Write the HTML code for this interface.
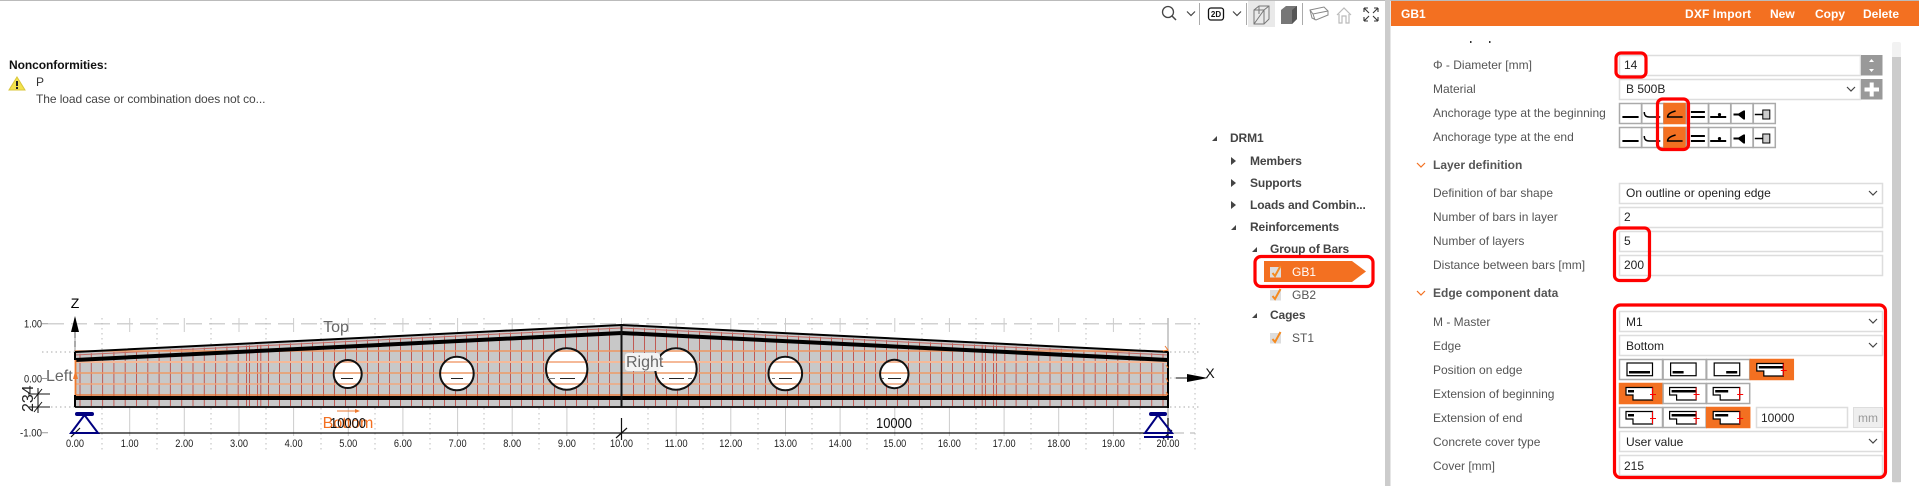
<!DOCTYPE html>
<html><head><meta charset="utf-8"><title>GB1</title>
<style>
html,body{margin:0;padding:0;background:#fff;width:1919px;height:486px;overflow:hidden}
svg{display:block;font-family:"Liberation Sans",sans-serif}
.l{font-size:12px;fill:#555}
.v{font-size:12px;fill:#222}
.t{font-size:12px;font-weight:bold;fill:#444;letter-spacing:-.12px}
.a{font-size:11px;fill:#222}
.f{fill:#fff;stroke:#ddd;stroke-width:1.5}
.c{fill:#fff;stroke:#aaa;stroke-width:1.5}
.o{fill:#f37021;stroke:#f37021;stroke-width:1.5}
.r{fill:none;stroke:#f00;stroke-width:3.2}
.h{font-size:12px;font-weight:bold;fill:#fff}
</style></head><body>
<svg width="1919" height="486" viewBox="0 0 1919 486" xmlns="http://www.w3.org/2000/svg">
<defs>
<clipPath id="beam"><path d="M75 354L621.5 327L1168 354V406H75Z"/></clipPath>
<g id="a1"><path d="M3.4 14H19.6" stroke="#000" stroke-width="2" fill="none"/></g>
<g id="a2"><path d="M3 9C3 13 5 14 8 14H19" stroke="#000" stroke-width="1.5" fill="none"/></g>
<g id="a3"><path d="M12 8C8 9 4 11 4 14H19" stroke="#000" stroke-width="1.5" fill="none"/></g>
<g id="a4"><path d="M5 9H19M5 14H19" stroke="#000" stroke-width="2" fill="none"/></g>
<g id="a5"><path d="M2 14H18" stroke="#000" stroke-width="2" fill="none"/><circle cx="11.3" cy="11.6" r="1.6"/></g>
<g id="a6"><path d="M3 11.5H9" stroke="#000" stroke-width="2" fill="none"/><path d="M8 10.5L13 7.5H14.5V16.500H13L8 12.5Z"/></g>
<g id="a7"><path d="M2 11.5H10" stroke="#000" stroke-width="1.5" fill="none"/><rect x="10" y="7" width="7" height="9" fill="#ccc" stroke="#000"/></g>
<g id="shape"><path d="M7 4.5H33.5V17H14V12H7Z" fill="#fff" stroke="#000" stroke-width="1.2"/><path d="M33.5 4.5V17M31 11.5H37" stroke="#f00" stroke-width="1" fill="none"/></g>
<g id="box"><rect x="8" y="4" width="25.5" height="12.7" fill="#fff" stroke="#000" stroke-width="1.2"/></g>
<g id="chk"><rect width="11" height="10.5" fill="#ddd"/><path d="M2.5 6L5 9L10.5 -1" stroke="#f58a1f" stroke-width="2" fill="none"/></g>
<path id="ch" d="M0 0L4 4L8 0" fill="none" stroke="#444" stroke-width="1.2"/>
</defs>

<rect x="0" y="0" width="1919" height="1" fill="#bbb"/>

<!-- toolbar -->
<circle cx="1168" cy="12" r="5.5" fill="none" stroke="#444" stroke-width="1.3"/><path d="M1172 16L1176 20" stroke="#444" stroke-width="1.5"/>
<use href="#ch" x="1187" y="11.5"/>
<rect x="1199" y="3" width="1" height="22" fill="#aaa"/>
<rect x="1208.5" y="8" width="15" height="12" rx="2.5" fill="none" stroke="#111" stroke-width="1.3"/>
<text x="1216" y="17" text-anchor="middle" font-size="8" font-weight="bold" fill="#111">2D</text>
<use href="#ch" x="1233" y="11.5"/>
<rect x="1246" y="3" width="1" height="22" fill="#aaa"/>
<rect x="1248" y="1" width="27" height="26" fill="#e9e9e9"/>
<path d="M1254 10L1259 6H1269V19L1264 24H1254ZM1254 10H1264V24M1264 10L1269 6M1254 24L1264 10M1259 6V14" fill="none" stroke="#777" stroke-width="1"/>
<path d="M1281 10L1286 6H1297V19L1292 24H1281Z" fill="#777"/><path d="M1292 10L1297 6V19L1292 24Z" fill="#555"/>
<rect x="1302" y="3" width="1" height="22" fill="#aaa"/>
<path d="M1310 10L1324 7L1328 11V15L1316 20L1312 18ZM1310 10L1313 14L1328 11M1313 14L1315 20" fill="none" stroke="#888" stroke-width="1"/>
<path d="M1337 15L1344 8L1351 15M1339 14V23H1342V16H1346V23H1349V14" fill="none" stroke="#bbb" stroke-width="1.2"/>
<path d="M1364 8H1368M1364 8V12M1364 8L1369 13M1378 8H1374M1378 8V12M1378 8L1373 13M1364 21H1368M1364 21V17M1364 21L1369 16M1378 21H1374M1378 21V17M1378 21L1373 16" fill="none" stroke="#333" stroke-width="1.1"/>

<!-- nonconformities -->
<text x="9" y="69" font-size="12" font-weight="bold" fill="#111" letter-spacing="-.06">Nonconformities:</text>
<path d="M17 77L25 90H9Z" fill="#f3e24c" stroke="#d8c63a" stroke-width="1"/>
<rect x="16" y="81" width="2" height="5" fill="#222"/><rect x="16" y="87" width="2" height="2" fill="#222"/>
<text x="36" y="86" font-size="12" fill="#333">P</text>
<text x="36" y="103" font-size="12" fill="#444" letter-spacing="-.08">The load case or combination does not co...</text>

<!-- grid -->
<path d="M48 323.7H1200" stroke="#d2d2d2" stroke-width="1.5" stroke-dasharray="16 7"/>
<path d="M1170 433H1195" stroke="#ccc" stroke-width="1.5" stroke-dasharray="14 6"/>
<path d="M42 352H75M42 407H75M1170 352H1200M1170 407H1200M1170 378H1176" stroke="#aaa" stroke-width="1" stroke-dasharray="1.5 3"/>
<path d="M102 318V450M157 318V450M211 318V450M266 318V450M321 318V450M375 318V450M430 318V450M484 318V450M539 318V450M594 318V450M648 318V450M703 318V450M758 318V450M812 318V450M867 318V450M922 318V450M976 318V450M1031 318V450M1086 318V450M1140 318V450M1195 318V450" stroke="#bbb" stroke-width="1" stroke-dasharray="1.5 3.5"/>
<path d="M129.7 318v14M129.7 408v28M184.3 318v14M184.3 408v28M239 318v14M239 408v28M293.6 318v14M293.6 408v28M348.3 318v14M348.3 408v28M402.9 318v14M402.9 408v28M457.6 318v14M457.6 408v28M512.2 318v14M512.2 408v28M566.9 318v14M566.9 408v28M676.2 318v14M676.2 408v28M730.8 318v14M730.8 408v28M785.5 318v14M785.5 408v28M840.1 318v14M840.1 408v28M894.8 318v14M894.8 408v28M949.4 318v14M949.4 408v28M1004.1 318v14M1004.1 408v28M1058.7 318v14M1058.7 408v28M1113.4 318v14M1113.4 408v28M621.5 318v10" stroke="#ccc" stroke-width="1"/>
<path d="M75 318V352M1168 318V352M1168 408V438" stroke="#bbb" stroke-width="1.5"/>
<path d="M75 332V352" stroke="#999" stroke-width="1.5" stroke-dasharray="6 3"/>

<!-- beam -->
<path d="M75 352L621.5 325L1168 352V407H75Z" fill="#c8c8c8"/>
<g clip-path="url(#beam)" stroke="#c05a54" stroke-width="1" fill="none">
<path d="M609.5 320v88m-11-88v88m-11-88v88m-11-88v88m-11-88v88m-11-88v88m-11-88v88m-11-88v88m-11-88v88m-11-88v88m-11-88v88m-11-88v88m-11-88v88m-11-88v88m-11-88v88m-11-88v88m-11-88v88m-11-88v88m-11-88v88m-11-88v88m-11-88v88m-11-88v88m-11-88v88m-11-88v88m-11-88v88m-11-88v88m-11-88v88m-11-88v88m-11-88v88m-11-88v88m-11-88v88m-11-88v88m-11-88v88m-11-88v88"/>
<path d="M633.5 320v88m11-88v88m11-88v88m11-88v88m11-88v88m11-88v88m11-88v88m11-88v88m11-88v88m11-88v88m11-88v88m11-88v88m11-88v88m11-88v88m11-88v88m11-88v88m11-88v88m11-88v88m11-88v88m11-88v88m11-88v88m11-88v88m11-88v88m11-88v88m11-88v88m11-88v88m11-88v88m11-88v88m11-88v88m11-88v88m11-88v88m11-88v88m11-88v88m11-88v88"/>
<path d="M80 320v88m11.3-88v88m11.3-88v88m11.3-88v88m11.3-88v88m11.3-88v88m11.3-88v88m11.3-88v88m11.3-88v88m11.3-88v88m11.3-88v88m11.3-88v88m11.3-88v88m11.3-88v88m11.3-88v88m11.3-88v88m11.3-88v88"/>
<path d="M1163 320v88m-11.3-88v88m-11.3-88v88m-11.3-88v88m-11.3-88v88m-11.3-88v88m-11.3-88v88m-11.3-88v88m-11.3-88v88m-11.3-88v88m-11.3-88v88m-11.3-88v88m-11.3-88v88m-11.3-88v88m-11.3-88v88m-11.3-88v88m-11.3-88v88"/>
</g>
<g fill="#fff">
<circle cx="347.7" cy="374" r="14"/><circle cx="456.9" cy="373.5" r="16.8"/><circle cx="566.7" cy="369" r="20.7"/><circle cx="676" cy="369" r="20.7"/><circle cx="785.3" cy="373.5" r="16.8"/><circle cx="894.3" cy="374" r="14.2"/>
</g>
<path d="M75 355L621.5 328L1168 355" fill="none" stroke="#c56b66" stroke-width="1"/>
<path d="M75 351H1168" stroke="#ee9560" stroke-width="1.5"/>
<path d="M75 362H1168" stroke="#f5b998" stroke-width="2"/>
<path d="M75 373H1168" stroke="#ee9a66" stroke-width="1.6"/>
<path d="M75 384H1168" stroke="#f0a77e" stroke-width="1.6"/>
<path d="M75 395H1168" stroke="#ee6e24" stroke-width="1.3"/>
<path d="M75 352L621.5 325L1168 352" fill="none" stroke="#000" stroke-width="2"/>
<path d="M75 360L621.5 333L1168 360" fill="none" stroke="#000" stroke-width="4"/>
<path d="M75 398H1168" stroke="#000" stroke-width="4"/>
<path d="M75 407H1168" stroke="#222" stroke-width="2"/>
<path d="M75 352V360M75 395V407" stroke="#000" stroke-width="2"/>
<path d="M75.5 360V395" stroke="#ee7a30" stroke-width="1.8"/>
<path d="M73 379L75.5 370L78 379Z" fill="#ee7a30"/>
<path d="M1168 351.5V408" stroke="#000" stroke-width="2"/>
<path d="M621.5 325V407" stroke="#111" stroke-width="2"/>
<path d="M1165 346L1168 350L1163 351M1166 365L1168 368M1166 378L1168 382M1166 392L1168 395" fill="none" stroke="#ee7a30" stroke-width="1"/>
<g fill="none" stroke="#111" stroke-width="2">
<circle cx="347.7" cy="374" r="14"/><circle cx="456.9" cy="373.5" r="16.8"/><circle cx="566.7" cy="369" r="20.7"/><circle cx="676" cy="369" r="20.7"/><circle cx="785.3" cy="373.5" r="16.8"/><circle cx="894.3" cy="374" r="14.2"/>
</g>
<path d="M341 378.5H353M451 378.5H463M560 378.5H575M669 378.5H684M779 378.5H792M888 378.5H901" stroke="#222" stroke-width="1"/>
<path d="M548 378.5H555M662 378.5H664M688 378.5H692M772 378.5H775M882 378.5H884" stroke="#777" stroke-width="1"/>

<!-- dimensions and axes -->
<path d="M70 433H1168" stroke="#111" stroke-width="1.2"/>
<path d="M621.5 418V440M616 438L627 428" stroke="#111" stroke-width="1.2"/>
<path d="M71 437L80 428M1163 439L1172 430M1168 418V440" stroke="#111" stroke-width="1.2"/>
<path d="M28 394H50M28 407H50M34 399L42 389M34 412L42 402M38 388V413" stroke="#111" stroke-width="1" fill="none"/>
<text transform="translate(33,412) rotate(-90)" font-size="16" fill="#222">234</text>

<path d="M77 414H92" stroke="#000080" stroke-width="4" stroke-linecap="round"/>
<path d="M84.5 415L71 433H98Z" fill="none" stroke="#000080" stroke-width="2"/>
<path d="M1151 414H1165" stroke="#000080" stroke-width="4" stroke-linecap="round"/>
<path d="M1158 415L1145 433H1172Z" fill="none" stroke="#000080" stroke-width="2"/>
<path d="M1144 437H1173" stroke="#000080" stroke-width="2"/>

<path d="M75 316L79 332H71Z" fill="#000"/>
<text x="75" y="308" text-anchor="middle" font-size="14" fill="#000">Z</text>
<path d="M1176 378H1190" stroke="#111" stroke-width="1"/><path d="M1187 374L1208 378L1187 382Z" fill="#000"/>
<text x="1210" y="378" text-anchor="middle" font-size="14" fill="#111">X</text>

<text x="336" y="332" text-anchor="middle" font-size="16" fill="#666">Top</text>
<text x="46" y="381" font-size="16" fill="#666">Left</text>
<rect x="625" y="353" width="35" height="18" rx="3" fill="#f3f3f3"/>
<text x="626" y="367" font-size="16" fill="#666">Right</text>
<path d="M337 411H356" stroke="#ee7a30" stroke-width="1"/><path d="M355 409L360 411L355 413Z" fill="#ee7a30"/>
<text x="348" y="428" text-anchor="middle" font-size="16" fill="#f37021">Bottom</text>
<text x="348" y="428" text-anchor="middle" font-size="15" fill="#111" textLength="36" lengthAdjust="spacingAndGlyphs">10000</text>
<text x="894" y="428" text-anchor="middle" font-size="15" fill="#111" textLength="36" lengthAdjust="spacingAndGlyphs">10000</text>

<g class="a" text-anchor="end"><text x="42" y="327.5" textLength="18" lengthAdjust="spacingAndGlyphs">1.00</text><text x="42" y="382.5" textLength="18" lengthAdjust="spacingAndGlyphs">0.00</text><text x="42" y="436.5" textLength="22" lengthAdjust="spacingAndGlyphs">-1.00</text></g>
<path d="M42 323.7H48M42 378.5H48M42 432.7H48" stroke="#999" stroke-width="1"/>
<g class="a" text-anchor="middle">
<text x="75" y="447" textLength="18" lengthAdjust="spacingAndGlyphs">0.00</text><text x="129.7" y="447" textLength="18" lengthAdjust="spacingAndGlyphs">1.00</text><text x="184.3" y="447" textLength="18" lengthAdjust="spacingAndGlyphs">2.00</text><text x="239" y="447" textLength="18" lengthAdjust="spacingAndGlyphs">3.00</text><text x="293.6" y="447" textLength="18" lengthAdjust="spacingAndGlyphs">4.00</text><text x="348.3" y="447" textLength="18" lengthAdjust="spacingAndGlyphs">5.00</text><text x="402.9" y="447" textLength="18" lengthAdjust="spacingAndGlyphs">6.00</text><text x="457.6" y="447" textLength="18" lengthAdjust="spacingAndGlyphs">7.00</text><text x="512.2" y="447" textLength="18" lengthAdjust="spacingAndGlyphs">8.00</text><text x="566.9" y="447" textLength="18" lengthAdjust="spacingAndGlyphs">9.00</text><text x="621.5" y="447" textLength="23" lengthAdjust="spacingAndGlyphs">10.00</text><text x="676.2" y="447" textLength="23" lengthAdjust="spacingAndGlyphs">11.00</text><text x="730.8" y="447" textLength="23" lengthAdjust="spacingAndGlyphs">12.00</text><text x="785.5" y="447" textLength="23" lengthAdjust="spacingAndGlyphs">13.00</text><text x="840.1" y="447" textLength="23" lengthAdjust="spacingAndGlyphs">14.00</text><text x="894.8" y="447" textLength="23" lengthAdjust="spacingAndGlyphs">15.00</text><text x="949.4" y="447" textLength="23" lengthAdjust="spacingAndGlyphs">16.00</text><text x="1004.1" y="447" textLength="23" lengthAdjust="spacingAndGlyphs">17.00</text><text x="1058.7" y="447" textLength="23" lengthAdjust="spacingAndGlyphs">18.00</text><text x="1113.4" y="447" textLength="23" lengthAdjust="spacingAndGlyphs">19.00</text><text x="1168" y="447" textLength="23" lengthAdjust="spacingAndGlyphs">20.00</text>
</g>

<!-- tree -->
<g class="t">
<text x="1230" y="142">DRM1</text><text x="1250" y="165">Members</text><text x="1250" y="187">Supports</text><text x="1250" y="209">Loads and Combin...</text><text x="1250" y="231">Reinforcements</text><text x="1270" y="253">Group of Bars</text><text x="1270" y="319">Cages</text>
</g>
<g fill="#444">
<path d="M1212 141L1217 136V141Z"/><path d="M1231 157L1236 161L1231 165Z"/><path d="M1231 179L1236 183L1231 187Z"/><path d="M1231 201L1236 205L1231 209Z"/><path d="M1231 230L1236 225V230Z"/><path d="M1252 252L1257 247V252Z"/><path d="M1252 318L1257 313V318Z"/>
</g>
<path d="M1264 261H1352L1366 271.5L1352 282H1264Z" fill="#f37021"/>
<use href="#chk" x="1270" y="267"/>
<text x="1292" y="276" font-size="12" fill="#fff">GB1</text>
<use href="#chk" x="1270" y="290"/>
<text x="1292" y="299" font-size="12" fill="#555">GB2</text>
<use href="#chk" x="1270" y="333"/>
<text x="1292" y="342" font-size="12" fill="#555">ST1</text>
<rect x="1255" y="256.500" width="118" height="30" rx="6" class="r"/>

<!-- splitter / panel -->
<rect x="1385" y="0" width="5.5" height="486" fill="#ccc"/>
<rect x="1391" y="1" width="528" height="25" fill="#f37021"/>
<text x="1401" y="18" class="h">GB1</text>
<text x="1685" y="18" class="h" letter-spacing=".15">DXF Import</text>
<text x="1770" y="18" class="h">New</text>
<text x="1815" y="18" class="h">Copy</text>
<text x="1863" y="18" class="h">Delete</text>
<rect x="1892" y="42" width="9" height="441" rx="2" fill="#f2f2f2"/>
<rect x="1892" y="57" width="9" height="425" fill="#ccc"/>
<rect x="1470" y="41" width="1.5" height="2" fill="#333"/><rect x="1489" y="41" width="1.5" height="2" fill="#333"/>

<!-- labels -->
<g class="l">
<text x="1433" y="69">Φ - Diameter [mm]</text>
<text x="1433" y="93">Material</text>
<text x="1433" y="117">Anchorage type at the beginning</text>
<text x="1433" y="141">Anchorage type at the end</text>
<text x="1433" y="197">Definition of bar shape</text>
<text x="1433" y="221">Number of bars in layer</text>
<text x="1433" y="245">Number of layers</text>
<text x="1433" y="269">Distance between bars [mm]</text>
<text x="1433" y="326">M - Master</text>
<text x="1433" y="350">Edge</text>
<text x="1433" y="374">Position on edge</text>
<text x="1433" y="398">Extension of beginning</text>
<text x="1433" y="422">Extension of end</text>
<text x="1433" y="446">Concrete cover type</text>
<text x="1433" y="470">Cover [mm]</text>
</g>
<text x="1433" y="169" font-size="12" font-weight="bold" fill="#555">Layer definition</text>
<text x="1433" y="297" font-size="12" font-weight="bold" fill="#555">Edge component data</text>
<path d="M1417 163L1421 167L1425 163M1417 291L1421 295L1425 291" fill="none" stroke="#f37021" stroke-width="1.2"/>

<!-- fields -->
<rect x="1619.5" y="55.5" width="241" height="20" class="f"/>
<rect x="1861" y="55" width="21.5" height="20.5" fill="#999"/>
<path d="M1869 62L1871.5 59L1874 62ZM1869 69L1871.5 72L1874 69Z" fill="#fff"/>
<text x="1624" y="69" class="v">14</text>
<rect x="1619.5" y="79.5" width="241" height="20" class="f"/>
<text x="1626" y="93" class="v">B 500B</text>
<use href="#ch" x="1847" y="87"/>
<rect x="1861" y="79" width="21.5" height="20.5" fill="#999"/>
<path d="M1864.500 89.500H1879M1871.700 82.500V96.500" stroke="#fff" stroke-width="4"/>

<g transform="translate(1619,103)">
<rect x=".5" y=".5" width="22" height="20" class="c"/><use href="#a1"/>
<g transform="translate(22.3 0)"><rect x=".5" y=".5" width="22" height="20" class="c"/><use href="#a2"/></g>
<g transform="translate(44.6 0)"><rect x=".5" y=".5" width="22" height="20" class="o"/><use href="#a3"/></g>
<g transform="translate(66.9 0)"><rect x=".5" y=".5" width="22" height="20" class="c"/><use href="#a4"/></g>
<g transform="translate(89.2 0)"><rect x=".5" y=".5" width="22" height="20" class="c"/><use href="#a5"/></g>
<g transform="translate(111.5 0)"><rect x=".5" y=".5" width="22" height="20" class="c"/><use href="#a6"/></g>
<g transform="translate(133.8 0)"><rect x=".5" y=".5" width="22" height="20" class="c"/><use href="#a7"/></g>
</g>
<g transform="translate(1619,127)">
<rect x=".5" y=".5" width="22" height="20" class="c"/><use href="#a1"/>
<g transform="translate(22.3 0)"><rect x=".5" y=".5" width="22" height="20" class="c"/><use href="#a2"/></g>
<g transform="translate(44.6 0)"><rect x=".5" y=".5" width="22" height="20" class="o"/><use href="#a3"/></g>
<g transform="translate(66.9 0)"><rect x=".5" y=".5" width="22" height="20" class="c"/><use href="#a4"/></g>
<g transform="translate(89.2 0)"><rect x=".5" y=".5" width="22" height="20" class="c"/><use href="#a5"/></g>
<g transform="translate(111.5 0)"><rect x=".5" y=".5" width="22" height="20" class="c"/><use href="#a6"/></g>
<g transform="translate(133.8 0)"><rect x=".5" y=".5" width="22" height="20" class="c"/><use href="#a7"/></g>
</g>

<rect x="1619.5" y="183.5" width="263" height="20" class="f"/><text x="1626" y="197" class="v">On outline or opening edge</text><use href="#ch" x="1869" y="191"/>
<rect x="1619.5" y="207.5" width="263" height="20" class="f"/><text x="1624" y="221" class="v">2</text>
<rect x="1619.5" y="231.5" width="263" height="20" class="f"/><text x="1624" y="245" class="v">5</text>
<rect x="1619.5" y="255.500" width="263" height="20" class="f"/><text x="1624" y="269" class="v">200</text>

<rect x="1619.5" y="311.5" width="263" height="20" class="f"/><text x="1626" y="326" class="v">M1</text><use href="#ch" x="1869" y="319"/>
<rect x="1619.5" y="335.5" width="263" height="20" class="f"/><text x="1626" y="350" class="v">Bottom</text><use href="#ch" x="1869" y="343"/>

<g transform="translate(1619,359)">
<rect x=".5" y=".5" width="43" height="20" class="c"/><use href="#box"/><rect x="10" y="12" width="21" height="2.5"/>
<g transform="translate(43.6 0)"><rect x=".5" y=".5" width="43" height="20" class="c"/><use href="#box"/><rect x="10" y="12" width="11" height="2.5"/></g>
<g transform="translate(87.2 0)"><rect x=".5" y=".5" width="43" height="20" class="c"/><use href="#box"/><rect x="20" y="12" width="11" height="2.5"/></g>
<g transform="translate(130.8 0)"><rect x=".5" y=".5" width="43" height="20" class="o"/><use href="#shape"/><rect x="9" y="7" width="24" height="2.5"/></g>
</g>
<g transform="translate(1619,383)">
<rect x=".5" y=".5" width="43" height="20" class="o"/><use href="#shape"/><rect x="9" y="7" width="6" height="2.5"/>
<g transform="translate(43.6 0)"><rect x=".5" y=".5" width="43" height="20" class="c"/><use href="#shape"/><rect x="9" y="7" width="24" height="2.5"/></g>
<g transform="translate(87.2 0)"><rect x=".5" y=".5" width="43" height="20" class="c"/><use href="#shape"/><rect x="9" y="7" width="13" height="2.5"/></g>
</g>
<g transform="translate(1619,407)">
<rect x=".5" y=".5" width="43" height="20" class="c"/><use href="#shape"/><rect x="9" y="7" width="6" height="2.5"/>
<g transform="translate(43.6 0)"><rect x=".5" y=".5" width="43" height="20" class="c"/><use href="#shape"/><rect x="9" y="7" width="24" height="2.5"/></g>
<g transform="translate(87.2 0)"><rect x=".5" y=".5" width="43" height="20" class="o"/><use href="#shape"/><rect x="9" y="7" width="13" height="2.5"/></g>
</g>
<rect x="1756.500" y="407.5" width="91" height="20" class="f"/><text x="1761" y="422" class="v">10000</text>
<rect x="1853.500" y="407.5" width="29" height="20" fill="#eee" stroke="#ddd"/><text x="1868" y="422" text-anchor="middle" font-size="12" fill="#999">mm</text>
<rect x="1619.5" y="431.5" width="263" height="20" class="f"/><text x="1626" y="446" class="v">User value</text><use href="#ch" x="1869" y="439"/>
<rect x="1619.5" y="455.5" width="263" height="20" class="f"/><text x="1624" y="470" class="v">215</text>

<!-- red markers -->
<rect x="1616" y="53" width="30" height="24" rx="5" class="r"/>
<rect x="1657.500" y="99" width="31" height="50.500" rx="5" class="r"/>
<rect x="1614.500" y="228" width="35" height="52.500" rx="5" class="r"/>
<rect x="1614.500" y="305" width="271" height="172.500" rx="6" class="r"/>
</svg>
</body></html>
